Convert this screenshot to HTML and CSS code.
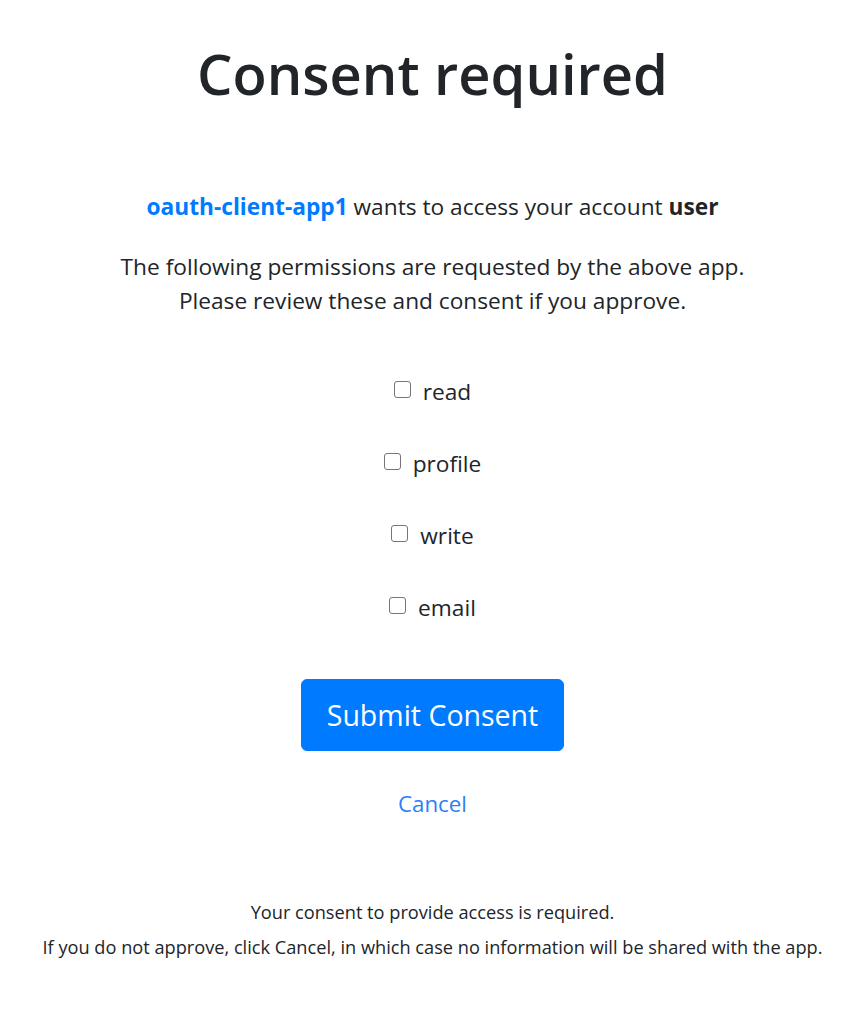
FILE: index.html
```html
<!DOCTYPE html>
<html lang="en">
<head>
<meta charset="utf-8">
<title>Consent required</title>
<link rel="stylesheet" href="styles.css">
</head>
<body>
<main class="page">
  <h1 class="title">Consent required</h1>
  <p class="intro"><span class="client">oauth-client-app1</span> wants to access your account <b class="account">user</b></p>
  <p class="desc">The following permissions are requested by the above app.<br>Please review these and consent if you approve.</p>
  <form class="scopes">
    <label class="scope"><input type="checkbox" class="check"><span>read</span></label>
    <label class="scope"><input type="checkbox" class="check"><span>profile</span></label>
    <label class="scope"><input type="checkbox" class="check"><span>write</span></label>
    <label class="scope"><input type="checkbox" class="check"><span>email</span></label>
    <button type="button" class="submit">Submit Consent</button>
    <a class="cancel" href="#">Cancel</a>
  </form>
  <div class="notes">
    <p class="note">Your consent to provide access is required.</p>
    <p class="note">If you do not approve, click Cancel, in which case no information will be shared with the app.</p>
  </div>
</main>
</body>
</html>
```
FILE: styles.css
```css
html, body {
  margin: 0;
  padding: 0;
  background: #ffffff;
}
body {
  font-family: "Open Sans", "Noto Sans", sans-serif;
  color: #212529;
  text-align: center;
}
.page {
  display: flex;
  flex-direction: column;
  align-items: center;
  padding-top: 38px;
}
.title {
  margin: 0;
  font-size: 56px;
  line-height: 70px;
  font-weight: 600;
  color: #212529;
}
.intro {
  margin: 82px 0 0;
  font-size: 22.7px;
  line-height: 34px;
}
.client {
  color: #007bff;
  font-weight: 700;
}
.account {
  font-weight: 700;
}
.desc {
  margin: 26px 0 0;
  font-size: 22.7px;
  line-height: 34px;
}
.scopes {
  margin: 57px 0 0;
  display: flex;
  flex-direction: column;
  align-items: center;
}
.scope {
  display: flex;
  align-items: center;
  gap: 12px;
  font-size: 22.7px;
  line-height: 34px;
  height: 34px;
  margin-bottom: 38px;
}
.scope:last-of-type {
  margin-bottom: 0;
}
.check {
  appearance: none;
  -webkit-appearance: none;
  margin: 0;
  width: 17px;
  height: 17px;
  border: 1px solid #767676;
  border-radius: 3px;
  background: #fff;
  position: relative;
  top: -3px;
}
.submit {
  margin-top: 54px;
  font-family: inherit;
  font-size: 28.5px;
  line-height: 40px;
  padding: 15px 24.5px;
  border: 1px solid #007bff;
  border-radius: 6px;
  background: #007bff;
  color: #fff;
  font-weight: 400;
}
.cancel {
  margin-top: 36px;
  font-size: 22.3px;
  line-height: 34px;
  color: #2b7ff7;
  text-decoration: none;
}
.notes {
  margin-top: 78px;
  display: flex;
  flex-direction: column;
  gap: 9px;
}
.note {
  margin: 0;
  font-size: 18.2px;
  line-height: 26px;
}
```
